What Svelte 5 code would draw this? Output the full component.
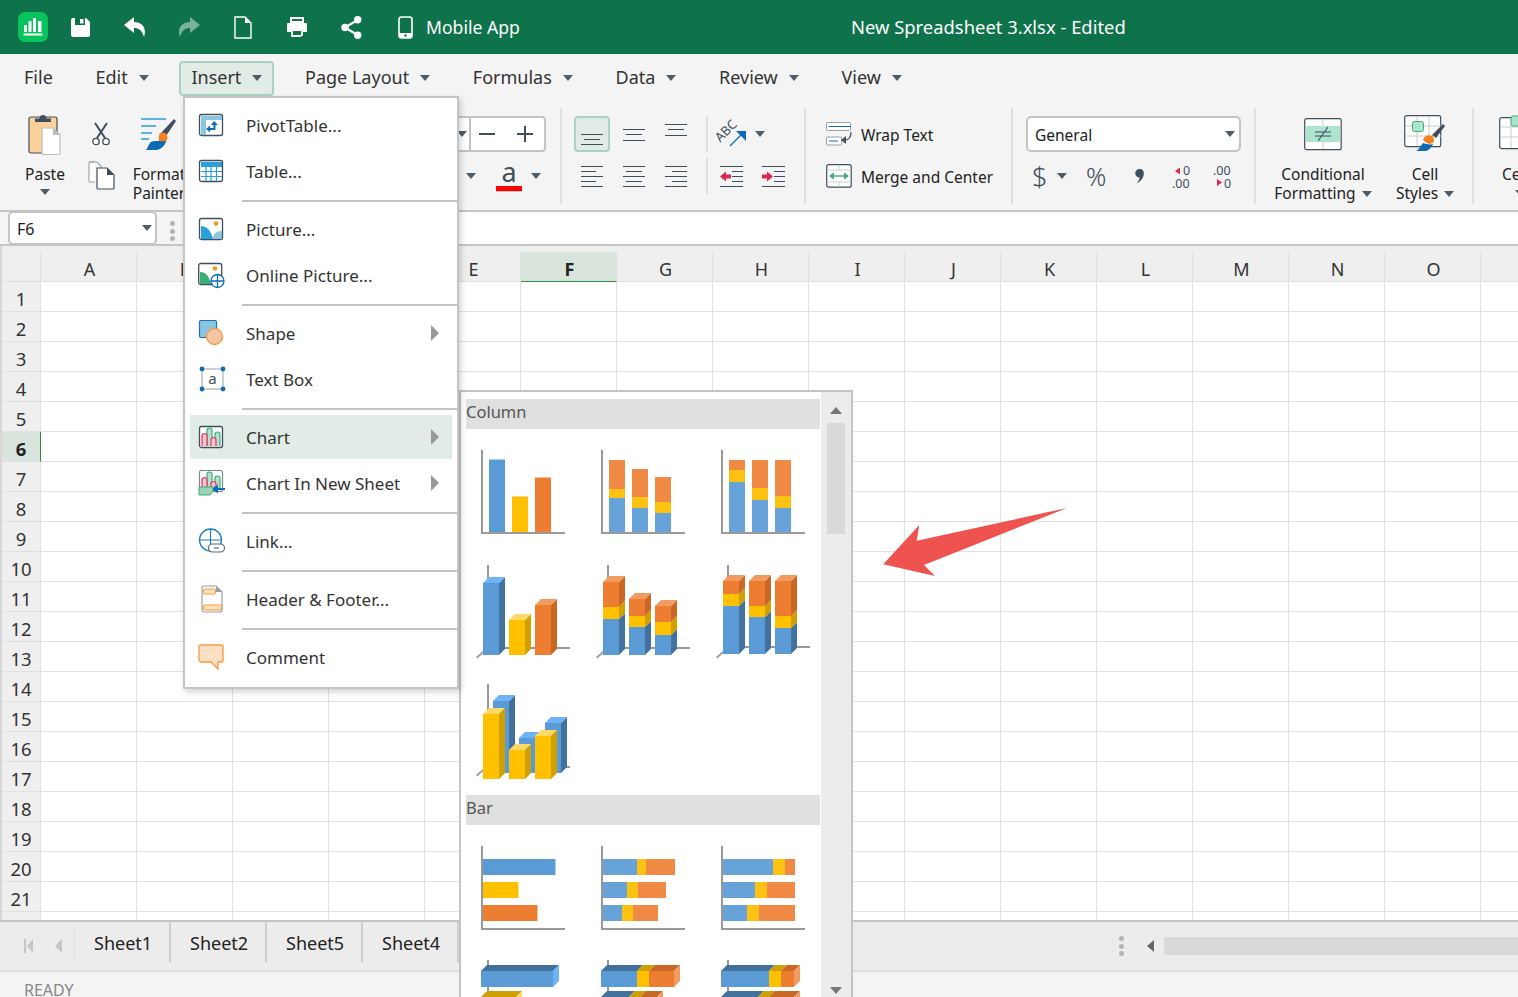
<script>
  const B = ['#5b9bd5', '#6db3f7', '#41719c'];
  const Y = ['#ffc000', '#ffd966', '#d0a000'];
  const O = ['#ed7d31', '#f29b61', '#c96724'];
  const FLAT = ['#67a3d8', '#fcc212', '#ef8943'];

  const rect = (fill, x, y, w, h) => ({ fill, points: `${x},${y} ${x + w},${y} ${x + w},${y + h} ${x},${y + h}` });
  const poly = (fill, ...p) => ({ fill, points: p.map((q) => q.join(',')).join(' ') });

  // same numbers are used for columns and bars
  const clustered = [[72.5, B[0]], [35.5, Y[0]], [54.5, O[0]]];
  const stacked = [[34, 9, 29], [24, 11, 28], [19, 11, 25]];
  const full = [[50, 12, 10], [32, 12, 28], [24, 12, 36]];
  const stacked3d = [[36, 12, 25], [28, 11, 17], [20, 13, 16]];
  const full3d = [[48, 12, 13], [37, 11, 25], [26, 12, 35]];

  const axis2d = [rect('#999', 9, 11, 2, 84), rect('#999', 9, 93, 84, 2)];

  function col3d(x, base, h, c, top = true) {
    const d = 6, w = 16, y = base - h;
    const out = [
      poly(c[2], [x + w, y], [x + w + d, y - d], [x + w + d, base - d], [x + w, base]),
      rect(c[0], x, y, w, h)
    ];
    if (top) out.push(poly(c[1], [x, y], [x + d, y - d], [x + w + d, y - d], [x + w, y]));
    return out;
  }

  function axis3d(top, line) {
    return [
      rect('#999', 15, top, 2, line - top),
      rect('#999', 15, line, 83, 2),
      poly('#999', [4, 100], [11, 94], [12, 95.5], [5, 101.5])
    ];
  }

  function stack3d(rows, base) {
    const xs = [11, 37, 63];
    return rows.flatMap((r, i) => {
      let y = base;
      return r.flatMap((h, k) => {
        const part = col3d(xs[i], y, h, [B, Y, O][k], k === 2);
        y -= h;
        return part;
      });
    });
  }

  function barRow(rows) {
    return rows.flatMap((r, i) => {
      let x = 11;
      return r.map((w, k) => {
        const part = rect(FLAT[k], x, 24 + i * 23, w, 16);
        x += w;
        return part;
      });
    });
  }

  function bar3d(x, y, w, c, side = true) {
    const d = 6, h = 16;
    const out = [
      poly(c[2], [x, y], [x + d, y - d], [x + w + d, y - d], [x + w, y]),
      rect(c[0], x, y, w, h)
    ];
    if (side) out.push(poly(c[1], [x + w, y], [x + w + d, y - d], [x + w + d, y + h - d], [x + w, y + h]));
    return out;
  }

  function barStack3d(rows) {
    return rows.flatMap((r, i) => {
      let x = 9;
      return r.flatMap((w, k) => {
        const part = bar3d(x, 18 + i * 26, w, [B, Y, O][k], k === 2);
        x += w;
        return part;
      });
    });
  }

  const columnCharts = [
    [...axis2d, ...clustered.map(([h, c], i) => rect(c, 17 + i * 23, 93 - h, 16, h))],
    [...axis2d, ...stacked.flatMap((r, i) => {
      let y = 93;
      return r.map((h, k) => { y -= h; return rect(FLAT[k], 17 + i * 23, y, 16, h); });
    })],
    [...axis2d, ...full.flatMap((r, i) => {
      let y = 93;
      return r.map((h, k) => { y -= h; return rect(FLAT[k], 17 + i * 23, y, 16, h); });
    })],
    [...axis3d(8, 90), ...col3d(11, 98, 72, B), ...col3d(37, 98, 35, Y), ...col3d(63, 98, 50, O)],
    [...axis3d(8, 90), ...stack3d(stacked3d, 98)],
    [...axis3d(8, 89), ...stack3d(full3d, 97)],
    [
      ...axis3d(9, 91),
      ...col3d(21, 98, 72, B), ...col3d(47, 98, 35, B), ...col3d(73, 98, 50, B),
      ...col3d(11, 104, 65, Y), ...col3d(37, 104, 29, Y), ...col3d(63, 104, 43, Y)
    ]
  ];

  const barCharts = [
    [...axis2d, ...clustered.map(([w, c], i) => rect(c, 11, 24 + i * 23, w, 16))],
    [...axis2d, ...barRow(stacked)],
    [...axis2d, ...barRow(full)],
    [rect('#999', 15, 7, 2, 60), ...bar3d(9, 18, 72, B), ...bar3d(9, 44, 35, Y)],
    [rect('#999', 15, 7, 2, 60), ...barStack3d(stacked3d)],
    [rect('#999', 15, 7, 2, 60), ...barStack3d(full3d)]
  ];

  const menuTabs = [
    { label: 'File' },
    { label: 'Edit', caret: true },
    { label: 'Insert', caret: true, active: true },
    { label: 'Page Layout', caret: true },
    { label: 'Formulas', caret: true },
    { label: 'Data', caret: true },
    { label: 'Review', caret: true },
    { label: 'View', caret: true }
  ];

  const frame = '<rect x="1.5" y="3.5" width="23" height="21" rx="2" fill="#fff" stroke="#3f4e5c" stroke-width="1.3"/>';
  const bars = '<path d="M9 23V7.500a2.500 2.500 0 0 1 5 0V23M17 23V11.500a2.500 2.500 0 0 1 5 0V23" fill="#b5e0cb" stroke="#3fae7c" stroke-width="1.200"/><path d="M4 23V13a2.500 2.500 0 0 1 5 0v10M13 23v-6a2.500 2.500 0 0 1 5 0v6" fill="#f9c4cf" stroke="#e0355f" stroke-width="1.200"/>';

  const menuItems = [
    { label: 'PivotTable...', icon: frame + '<path d="M3 5h21v4H8v15H3z" fill="#8ac6e0"/><path d="M16 10l4 4h-2.500v5H12v2.500L8 18l4-3.500V17h3.500v-3H13z" fill="#0b6cb5"/>' },
    { label: 'Table...', icon: frame + '<path d="M3 5h21v5H3z" fill="#29a0da"/><path d="M3 14.500h21M3 19.500h21M8 10v14M13 10v14M18.500 10v14" stroke="#29a0da" stroke-width="1.200"/>' },
    { label: 'Picture...', sepBefore: true, icon: frame + '<circle cx="18" cy="8.500" r="2.300" fill="#f7931e"/><path d="M15 24c0-5 3-8 9-8v8z" fill="#8ac6e0"/><path d="M3 11c6 0 10 5 12 13H3z" fill="#29a0da"/>' },
    { label: 'Online Picture...', icon: '<rect x=".7" y="2.500" width="23" height="21" rx="2" fill="#fff" stroke="#3f4e5c" stroke-width="1.300"/><circle cx="17" cy="7.500" r="2.300" fill="#f7931e"/><path d="M2 11c6 0 9 4 11 12H2z" fill="#3cae78"/><circle cx="19.500" cy="20" r="6.500" fill="#fff" stroke="#0b6cb5" stroke-width="1.300"/><path d="M13 20h13M19.500 13.500v13" stroke="#0b6cb5" stroke-width="1.300"/>' },
    { label: 'Shape', sepBefore: true, arrow: true, icon: '<rect x="1.500" y="1.500" width="17" height="17" rx="1.500" fill="#8ac6e0" stroke="#1f6fb5" stroke-width="1.200"/><circle cx="16.500" cy="17.500" r="8" fill="#f3c5a2" stroke="#f59a3e" stroke-width="1.300"/>' },
    { label: 'Text Box', textbox: true },
    { label: 'Chart', sepBefore: true, arrow: true, hover: true, icon: frame + bars },
    { label: 'Chart In New Sheet', arrow: true, icon: '<rect x="1.500" y="1.500" width="23" height="21" rx="2" fill="#fff" stroke="#7b858e" stroke-width="1.200"/><g transform="translate(0 -2)">' + bars + '</g><path d="M1 18h17l-6 8H1z" fill="#9ad5b8" stroke="#3fae7c"/><path d="M14 20l6-4.500V19h7v2h-7v3.500z" fill="#0b6cb5"/>' },
    { label: 'Link...', sepBefore: true, icon: '<circle cx="12.500" cy="13" r="11" fill="#fff" stroke="#1f7cc0" stroke-width="1.300"/><path d="M2 13h21M12.500 2v21" fill="none" stroke="#1f7cc0" stroke-width="1.200"/><rect x="10.500" y="17" width="16" height="8" rx="4" fill="#fff" stroke="#5b6772" stroke-width="1.200"/><path d="M16 21h5" stroke="#5b6772" stroke-width="1.200"/>' },
    { label: 'Header & Footer...', sepBefore: true, icon: '<path d="M5 1h13l6 6v18a2 2 0 0 1-2 2H6a2 2 0 0 1-2-2V2z" fill="#fff" stroke="#9aa0a6" stroke-width="1.200"/><path d="M18 1l6 6h-6z" fill="#9aa0a6"/><rect x="5.500" y="4" width="12" height="5" rx="1" fill="#ffe0bd" stroke="#f59a3e"/><rect x="5.500" y="20" width="18" height="5" rx="1" fill="#ffe0bd" stroke="#f59a3e"/>' },
    { label: 'Comment', sepBefore: true, icon: '<path d="M3 2h20a2 2 0 0 1 2 2v13a2 2 0 0 1-2 2h-3v7l-7-7H3a2 2 0 0 1-2-2V4a2 2 0 0 1 2-2z" fill="#fde0c4" stroke="#f59a3e" stroke-width="1.300"/>' }
  ];

  const columns = 'ABCDEFGHIJKLMNOP'.split('');
  const rows = Array.from({ length: 22 }, (_, i) => i + 1);

  const alignTop = [[134, 139, 144], [129, 134, 140], [124, 129, 135]];
  const textAlign = [
    [[0, 22], [0, 15], [0, 22], [0, 15], [0, 22]],
    [[0, 22], [3, 16], [0, 22], [3, 16], [0, 22]],
    [[0, 22], [7, 15], [0, 22], [7, 15], [0, 22]]
  ];
</script>

<div class="app">
  <header class="titlebar">
    <svg class="app-icon" width="30" height="30" viewBox="0 0 30 30">
      <rect width="30" height="30" rx="7" fill="#08c45c" />
      <path d="M6 13h3v7H6zM10.500 9h3v11h-3zM15 6h3v14h-3zM20 9h3.500v11H20zM5.500 21.500h19v2h-19z" fill="#fff" />
    </svg>
    <svg class="tb tb-save" width="19" height="19" viewBox="0 0 19 19">
      <path d="M0 2a2 2 0 0 1 2-2h13l4 4v13a2 2 0 0 1-2 2H2a2 2 0 0 1-2-2z" fill="#fff" />
      <path d="M4 0h10v7H4z" fill="#0e734b" /><path d="M9 1h3.500v4.500H9z" fill="#fff" />
    </svg>
    <svg class="tb tb-undo" width="22" height="20" viewBox="0 0 22 20">
      <path d="M10 0L0 8l10 8v-5c5 0 8 2.500 10 9 3-9-2-15-10-15z" fill="#fff" />
    </svg>
    <svg class="tb tb-redo" width="22" height="20" viewBox="0 0 22 20">
      <path d="M12 0l10 8-10 8v-5c-5 0-8 2.500-10 9-3-9 2-15 10-15z" fill="#fff" opacity=".45" />
    </svg>
    <svg class="tb tb-new" width="18" height="23" viewBox="0 0 18 23">
      <path d="M1 1h10l6 6v15H1z" fill="none" stroke="#fff" stroke-width="1.400" /><path d="M11 1l6 6h-6z" fill="#fff" />
    </svg>
    <svg class="tb tb-print" width="20" height="20" viewBox="0 0 20 20">
      <path d="M4 1h12v4H4z" fill="none" stroke="#fff" stroke-width="2" />
      <path d="M1 6h18a1 1 0 0 1 1 1v7a1 1 0 0 1-1 1h-3v-3H4v3H1a1 1 0 0 1-1-1V7a1 1 0 0 1 1-1z" fill="#fff" />
      <path d="M5 13h10v5l-2 1H5z" fill="none" stroke="#fff" stroke-width="1.800" />
    </svg>
    <svg class="tb tb-share" width="21" height="23" viewBox="0 0 21 23">
      <path d="M16.500 4L4 11.500 16.500 19" fill="none" stroke="#fff" stroke-width="2.200" />
      <circle cx="4" cy="11.500" r="3.700" fill="#fff" /><circle cx="16.700" cy="3.800" r="3.700" fill="#fff" /><circle cx="16.700" cy="19.200" r="3.700" fill="#fff" />
    </svg>
    <svg class="tb tb-phone" width="15" height="23" viewBox="0 0 15 23">
      <rect x="1" y="1" width="13" height="21" rx="2.500" fill="none" stroke="#fff" stroke-width="1.600" />
      <path d="M1 17h13v3a2 2 0 0 1-2 2H3a2 2 0 0 1-2-2z" fill="#fff" /><circle cx="7.500" cy="19.500" r="1.200" fill="#0e734b" />
    </svg>
    <span class="mobile">Mobile App</span>
    <span class="doc-title">New Spreadsheet 3.xlsx - Edited</span>
  </header>

  <nav class="menubar">
    {#each menuTabs as tab}
      <div class="tab" class:active={tab.active}>
        <span>{tab.label}</span>
        {#if tab.caret}<i class="caret"></i>{/if}
      </div>
    {/each}
  </nav>

  <section class="ribbon">
    <div class="group g-home">
      <div class="clip">
        <div class="paste">
          <svg width="34" height="42" viewBox="0 0 34 42">
            <rect x="1" y="4" width="28" height="36" rx="2" fill="#fdd19c" stroke="#3f4e5c" stroke-width="1.200" />
            <path d="M7 9V5.500h4.500a3.500 3.500 0 0 1 7 0H23V9z" fill="#3f4e5c" />
            <path d="M14 15h11l7 7v18a1.500 1.500 0 0 1-1.500 1.500h-15A1.500 1.500 0 0 1 14 40z" fill="#fff" stroke="#b9bec3" stroke-width="1.200" />
            <path d="M25 15l7 7h-7z" fill="#b9bec3" />
          </svg>
          <span>Paste</span>
          <i class="caret"></i>
        </div>
        <div class="clip-small">
          <svg width="18" height="24" viewBox="0 0 18 24">
            <path d="M3 1l10 15M15 1L5 16" stroke="#3f4e5c" stroke-width="2" fill="none" />
            <circle cx="4" cy="19.500" r="3.200" fill="#fff" stroke="#3f4e5c" stroke-width="1.300" />
            <circle cx="14" cy="19.500" r="3.200" fill="#fff" stroke="#3f4e5c" stroke-width="1.300" />
          </svg>
          <svg width="27" height="29" viewBox="0 0 27 29">
            <path d="M7 1H2a1 1 0 0 0-1 1v18a1 1 0 0 0 1 1h5" fill="#fff" stroke="#9aa0a6" stroke-width="1.100" />
            <path d="M1 1h8l4 4v3" fill="none" stroke="#9aa0a6" stroke-width="1.100" />
            <path d="M9 7h10l7 7v13a1 1 0 0 1-1 1H10a1 1 0 0 1-1-1z" fill="#fff" stroke="#3f4e5c" stroke-width="1.200" />
            <path d="M19 7l7 7h-7z" fill="#3f4e5c" />
          </svg>
        </div>
        <div class="painter">
          <svg width="36" height="33" viewBox="0 0 36 33">
            <path d="M0 1h25M0 8h15M0 15h11M0 21h8" stroke="#29a0da" stroke-width="1.300" />
            <path d="M20 15L33 1l2 2-10 15z" fill="#3f4e5c" />
            <path d="M19 15c5-2 9 2 7 7-1 3-5 5-8 5l-2-1c3-3 1-8 3-11z" fill="#f58220" />
            <path d="M5 32c2-2 3-7 5-8 5-2 8 0 15-1-1 5-5 8-9 9z" fill="#0b6cb5" />
          </svg>
          <span>Format<br />Painter</span>
        </div>
      </div>
      <div class="fontgroup">
        <div class="font-top">
          <div class="fontname"><i class="caret"></i></div>
          <div class="stepper">
            <svg width="54" height="20" viewBox="0 0 54 20"><path d="M0 10h16M38 10h16M46 2v16" stroke="#3f4e5c" stroke-width="2" /></svg>
          </div>
        </div>
        <div class="font-bottom">
          <i class="caret"></i>
          <div class="fontcolor"><span>a</span><b></b></div>
          <i class="caret"></i>
        </div>
      </div>
    </div>

    <div class="group g-align">
      <div class="align-grid">
        {#each alignTop as lines, i}
          <div class="btn" class:on={i === 0}>
            <svg width="22" height="32" viewBox="0 2 22 32">
              {#each lines as y, k}
                <path d="M{k === 1 ? 3 : 0} {y - 116 + 0.5}h{k === 1 ? 16 : 22}" stroke="#3f4e5c" stroke-width="1" />
              {/each}
            </svg>
          </div>
        {/each}
        {#each textAlign as lines}
          <div class="btn">
            <svg width="22" height="24" viewBox="0 0 22 24">
              {#each lines as [x, w], k}
                <path d="M{x} {2.500 + k * 5}h{w}" stroke="#3f4e5c" stroke-width="1" />
              {/each}
            </svg>
          </div>
        {/each}
      </div>
      <div class="mini-div"><i></i><i></i></div>
      <div class="indent-grid">
        <div class="orient">
          <svg width="32" height="30" viewBox="0 0 32 30">
            <text transform="translate(13 15) rotate(-45)" text-anchor="middle" class="abc">ABC</text>
            <path d="M14 27L26 15" stroke="#0b6cb5" stroke-width="1.300" />
            <path d="M20 12h10v10z" fill="#0b6cb5" />
          </svg>
          <i class="caret"></i>
        </div>
        {#each [0, 1] as dir}
          <div class="btn">
            <svg width="24" height="24" viewBox="0 0 24 24">
              <path d="M0 2.500h23M0 22.500h23" stroke="#3f4e5c" />
              <path d="M12 7.500h11M12 12.500h11M12 17.500h11" stroke="#3f4e5c" />
              {#if dir === 0}
                <path d="M0 12.500l6-5v3h5v4H6v3z" fill="#e0244e" />
              {:else}
                <path d="M11 12.500l-6-5v3H0v4h5v3z" fill="#e0244e" />
              {/if}
            </svg>
          </div>
        {/each}
      </div>
    </div>

    <div class="group g-wrap">
      <div class="line-btn">
        <svg width="26" height="24" viewBox="0 0 26 24">
          <rect x=".5" y=".5" width="24" height="8" rx="1" fill="#fff" stroke="#9aa0a6" />
          <path d="M3 4.500h22" stroke="#0b6cb5" />
          <rect x=".5" y="15" width="15" height="8" rx="1" fill="#fff" stroke="#9aa0a6" />
          <path d="M3 19h9" stroke="#0b6cb5" />
          <path d="M25 10c0 5-2 8-6 8" fill="none" stroke="#3f4e5c" stroke-width="1.200" />
          <path d="M15 18l5-4v8z" fill="#3f4e5c" />
        </svg>
        <span>Wrap Text</span>
      </div>
      <div class="line-btn">
        <svg width="26" height="24" viewBox="0 0 26 24">
          <rect x=".7" y=".7" width="24.500" height="22.500" rx="2" fill="#fff" stroke="#3f4e5c" stroke-width="1.200" />
          <path d="M13 1v5M13 18v5M1 6h24M1 18h24" stroke="#ccc" />
          <path d="M6 12h14" stroke="#3cae78" stroke-width="1.400" />
          <path d="M3 12l5-3.500v7zM23 12l-5-3.500v7z" fill="#3cae78" />
        </svg>
        <span>Merge and Center</span>
      </div>
    </div>

    <div class="group g-num">
      <div class="numfmt"><span>General</span><i class="caret"></i></div>
      <div class="numrow">
        <span class="sym dollar">$</span>
        <i class="caret"></i>
        <span class="sym percent">%</span>
        <svg class="comma" width="10" height="15" viewBox="0 0 10 15"><path d="M4.500 0a4 4 0 0 1 4.300 4.500c0 4-3 8-7.300 10 2-2 3-3.800 3-6a4.200 4.200 0 0 1 0-8.500z" fill="#3f4e5c" /></svg>
        <svg class="dec1" width="20" height="25" viewBox="0 0 20 25">
          <path d="M8 3.500l-5 3.500 5 3.500z" fill="#e0244e" />
          <text x="11" y="11" class="dec">0</text><text x="0" y="24" class="dec">.00</text>
        </svg>
        <svg class="dec2" width="20" height="25" viewBox="0 0 20 25">
          <text x="1" y="11" class="dec">.00</text>
          <path d="M5 15l5 3.500-5 3.500z" fill="#e0244e" />
          <text x="12" y="24" class="dec">0</text>
        </svg>
      </div>
    </div>

    <div class="group g-styles">
      <div class="big-btn cond">
        <svg width="38" height="36" viewBox="0 0 38 36">
          <rect x=".7" y="3.700" width="36.500" height="31" rx="2" fill="#fff" stroke="#3f4e5c" stroke-width="1.200" />
          <path d="M19 4v30" stroke="#ccc" />
          <path d="M2 11h34v16H2z" fill="#aee3d0" />
          <path d="M11 17h16M11 21h16M24 12l-10 14" stroke="#3f4e5c" stroke-width="1.100" />
        </svg>
        <span>Conditional</span>
        <span class="last">Formatting <i class="caret"></i></span>
      </div>
      <div class="big-btn">
        <svg width="42" height="36" viewBox="0 0 42 36">
          <rect x=".7" y=".7" width="36" height="31" rx="2" fill="#fff" stroke="#3f4e5c" stroke-width="1.200" />
          <path d="M1 11h36M1 21h36M13 1v30M25 1v30" stroke="#ccc" />
          <rect x="8.500" y="6.500" width="11" height="10" rx="2" fill="#aee3d0" stroke="#3cae78" />
          <path d="M28 20l11-11 2 2-9 12z" fill="#3f4e5c" />
          <path d="M19 25c1-4 5-6 9-4 3 2 2 6 1 7-4 2-7 0-10-3z" fill="#f58220" />
          <path d="M12 36c3-1 5-6 7-8 3 1 7 2 10 1-1 3-4 6-7 7z" fill="#0b6cb5" />
        </svg>
        <span>Cell</span>
        <span class="last">Styles <i class="caret"></i></span>
      </div>
    </div>

    <div class="g-cells">
      <svg width="30" height="36" viewBox="0 0 30 36">
        <rect x=".7" y="2.700" width="36" height="31" rx="2" fill="#fff" stroke="#3f4e5c" stroke-width="1.200" />
        <path d="M1 12h30M1 22h30M12 3v30" stroke="#ccc" />
        <rect x="12" y="1" width="14" height="10" rx="2" fill="#aee3d0" stroke="#3cae78" />
      </svg>
      <span>Cells</span>
      <i class="caret"></i>
    </div>
  </section>

  <div class="formulabar">
    <div class="namebox"><span>F6</span><i class="caret"></i></div>
    <div class="handle"><i></i><i></i><i></i></div>
    <div class="formula-input"></div>
  </div>

  <main class="sheet">
    <div class="colhead">
      <div class="corner"></div>
      {#each columns as c}
        <div class="colcell" class:sel={c === 'F'}>{c === 'P' ? '' : c}</div>
      {/each}
    </div>
    {#each rows as r}
      <div class="row">
        <div class="rowhead" class:sel={r === 6}>{r === 22 ? '' : r}</div>
        {#each columns as c}
          <div class="cell"></div>
        {/each}
      </div>
    {/each}
  </main>

  <div class="sheetbar">
    <div class="nav">
      <svg width="9" height="14" viewBox="0 0 9 14"><path d="M0 0h2v14H0zM9 0v14L3 7z" fill="#c6c6c6" /></svg>
      <svg width="7" height="14" viewBox="0 0 7 14"><path d="M7 0v14L0 7z" fill="#c6c6c6" /></svg>
    </div>
    {#each ['Sheet1', 'Sheet2', 'Sheet5', 'Sheet4', 'Sheet3'] as name}
      <div class="sheet-tab">{name}</div>
    {/each}
    <div class="sb-right">
      <div class="handle"><i></i><i></i><i></i></div>
      <svg width="7" height="12" viewBox="0 0 7 12"><path d="M7 0v12L0 6z" fill="#666" /></svg>
      <div class="track"></div>
    </div>
  </div>

  <footer class="status"><span>READY</span></footer>

  <!-- Insert dropdown -->
  <div class="dropdown">
    {#each menuItems as item}
      {#if item.sepBefore}<div class="sep"></div>{/if}
      <div class="item" class:hover={item.hover}>
        <svg class="item-icon" width="28" height="28" viewBox="0 0 28 28">
          {#if item.textbox}
            <rect x="4" y="4" width="21" height="20" fill="#fff" stroke="#9aa0a6" />
            <text x="14.500" y="19" class="tb-a">a</text>
            <circle cx="4" cy="4" r="2.400" fill="#0b6cb5" /><circle cx="25" cy="4" r="2.400" fill="#0b6cb5" />
            <circle cx="4" cy="24" r="2.400" fill="#0b6cb5" /><circle cx="25" cy="24" r="2.400" fill="#0b6cb5" />
          {:else}
            {@html item.icon}
          {/if}
        </svg>
        <span class="item-label">{item.label}</span>
        {#if item.arrow}
          <svg class="item-arrow" width="8" height="16" viewBox="0 0 8 16"><path d="M0 0l8 8-8 8z" fill="#999" /></svg>
        {/if}
      </div>
    {/each}
  </div>

  <!-- Chart gallery -->
  <div class="gallery">
    <div class="gallery-body">
      <div class="gal-head">Column</div>
      <div class="tiles">
        {#each columnCharts as shapes}
          <svg width="120" height="118" viewBox="0 0 120 118">
            {#each shapes as s}<polygon points={s.points} fill={s.fill} />{/each}
          </svg>
        {/each}
      </div>
      <div class="gal-head">Bar</div>
      <div class="tiles">
        {#each barCharts as shapes}
          <svg width="120" height="118" viewBox="0 0 120 118">
            {#each shapes as s}<polygon points={s.points} fill={s.fill} />{/each}
          </svg>
        {/each}
      </div>
    </div>
    <div class="gal-scroll">
      <svg width="12" height="7" viewBox="0 0 12 7"><path d="M6 0l6 7H0z" fill="#777" /></svg>
      <div class="thumb"></div>
      <svg class="down" width="12" height="7" viewBox="0 0 12 7"><path d="M0 0h12L6 7z" fill="#777" /></svg>
    </div>
  </div>

  <svg class="callout" width="192" height="76" viewBox="0 0 192 76">
    <polygon points="8.300,56.300 44.300,17 41.700,32.700 192,0 49,57 60,68" fill="#ee5350" />
  </svg>
</div>

<style>
  :global(body) {
    margin: 0;
    font-family: "Noto Sans", "Open Sans", sans-serif;
    color: #222;
  }

  .app {
    position: relative;
    width: 1518px;
    height: 997px;
    overflow: hidden;
    background: #fff;
    display: flex;
    flex-direction: column;
  }

  .caret {
    display: inline-block;
    flex: none;
    width: 0;
    height: 0;
    border-left: 5.500px solid transparent;
    border-right: 5.500px solid transparent;
    border-top: 6px solid #4f5b66;
  }

  /* title bar */
  .titlebar {
    flex: none;
    height: 54px;
    background: #0e734b;
    display: flex;
    align-items: center;
    color: #fff;
    font-size: 18px;
    padding-left: 18px;
  }
  .app-icon { flex: none; }
  .tb { flex: none; }
  .tb-save { margin-left: 23px; }
  .tb-undo { margin-left: 34px; }
  .tb-redo { margin-left: 32px; }
  .tb-new { margin-left: 34px; }
  .tb-print { margin-left: 35px; }
  .tb-share { margin-left: 34px; }
  .tb-phone { margin-left: 36px; }
  .mobile { margin-left: 13px; width: 93px; font-size: 17.600px; white-space: nowrap; }
  .doc-title { margin-left: 332px; margin-bottom: 1px; font-size: 18.400px; white-space: nowrap; }

  /* menu */
  .menubar {
    flex: none;
    height: 44px;
    background: #f4f4f4;
    display: flex;
    align-items: flex-start;
    gap: 18.700px;
    padding: 7px 0 0 12px;
    box-sizing: border-box;
    font-size: 18px;
    color: #333;
  }
  .tab {
    height: 35px;
    box-sizing: border-box;
    border: 2px solid transparent;
    border-radius: 4px;
    padding: 0 10px 4px;
    display: flex;
    align-items: center;
    gap: 11px;
    white-space: nowrap;
  }
  .tab .caret { margin-top: 3px; }
  .tab.active {
    background: #e0ece5;
    border-color: #a9d3c0;
  }

  /* ribbon */
  .ribbon {
    flex: none;
    height: 114px;
    background: #f4f4f4;
    border-bottom: 2px solid #c4c4c4;
    box-sizing: border-box;
    padding: 10px 0 6px;
    display: flex;
    font-size: 15.500px;
    color: #222;
    overflow: hidden;
  }
  .group {
    flex: none;
    box-sizing: border-box;
    border-right: 2px solid #e0e0e0;
  }
  .g-home {
    width: 562px;
    display: flex;
    justify-content: space-between;
    padding-right: 14px;
  }
  .clip { display: flex; }
  .paste {
    width: 60px;
    margin-left: 15px;
    display: flex;
    flex-direction: column;
    align-items: center;
    padding-top: 5px;
  }
  .paste span { line-height: 20px; margin-top: 9px; }
  .paste .caret { margin-top: 5px; }
  .clip-small {
    width: 30px;
    margin-left: 11px;
    display: flex;
    flex-direction: column;
    align-items: center;
    gap: 15px;
    padding-top: 14px;
  }
  .painter {
    width: 60px;
    margin-left: 13px;
    padding-top: 10px;
    text-align: center;
    display: flex;
    flex-direction: column;
    align-items: center;
    line-height: 19px;
    white-space: nowrap;
  }
  .painter span { margin-top: 14px; }

  .fontgroup {
    display: flex;
    flex-direction: column;
    align-items: flex-end;
    padding-top: 8px;
    gap: 6px;
  }
  .font-top { display: flex; height: 36px; }
  .fontname {
    width: 60px;
    box-sizing: border-box;
    background: #fff;
    border: 2px solid #c4c4c4;
    border-right: none;
    display: flex;
    align-items: center;
    justify-content: flex-end;
    padding-right: 2px;
  }
  .stepper {
    width: 77px;
    box-sizing: border-box;
    background: #fff;
    border: 2px solid #c4c4c4;
    border-radius: 0 4px 4px 0;
    display: flex;
    align-items: center;
    justify-content: center;
    padding-right: 4px;
  }
  .font-bottom {
    display: flex;
    align-items: center;
    height: 36px;
    width: 80px;
    padding-right: 2px;
    box-sizing: border-box;
  }
  .fontcolor {
    width: 26px;
    margin: 0 9px 0 20px;
    display: flex;
    flex-direction: column;
    align-items: center;
    color: #3f4e5c;
  }
  .fontcolor span { font-size: 27px; line-height: 24px; }
  .fontcolor b {
    display: block;
    width: 26px;
    height: 5px;
    background: #f00;
    margin-top: 2px;
    border-bottom: 1px solid #c4c4c4;
  }

  .g-align { width: 244px; display: flex; padding: 8px 0 0 12px; }
  .align-grid, .indent-grid {
    display: grid;
    grid-template-columns: 36px 36px 36px;
    grid-auto-rows: 36px;
    column-gap: 6px;
    row-gap: 6px;
  }
  .indent-grid { grid-template-columns: 36px 36px; }
  .btn {
    box-sizing: border-box;
    display: flex;
    align-items: center;
    justify-content: center;
    border: 2px solid transparent;
    border-radius: 4px;
  }
  .btn.on { background: #e0ece5; border-color: #a9d3c0; }
  .mini-div {
    display: flex;
    flex-direction: column;
    gap: 6px;
    margin: 0 6px 0 12px;
  }
  .mini-div i { display: block; width: 2px; height: 36px; background: #e0e0e0; }
  .orient {
    grid-column: span 2;
    display: flex;
    align-items: center;
    gap: 7px;
    padding-left: 2px;
  }
  .orient svg { overflow: visible; }
  .abc { font: 13px "Noto Sans", sans-serif; fill: #3f4e5c; }

  .g-wrap {
    width: 207px;
    padding: 8px 0 0 20px;
    display: grid;
    grid-auto-rows: 36px;
    row-gap: 6px;
  }
  .line-btn {
    display: flex;
    align-items: center;
    gap: 9px;
    white-space: nowrap;
  }
  .line-btn span { margin-top: 2px; }

  .g-num { width: 243px; padding: 8px 0 0 13px; }
  .numfmt {
    width: 215px;
    height: 36px;
    box-sizing: border-box;
    background: #fff;
    border: 2px solid #c4c4c4;
    border-radius: 5px;
    display: flex;
    align-items: center;
    justify-content: space-between;
    padding: 0 4px 0 7px;
  }
  .numfmt span { margin-top: 2px; }
  .numrow {
    height: 36px;
    margin-top: 6px;
    display: flex;
    align-items: center;
    padding-left: 6px;
  }
  .sym { color: #3f4e5c; line-height: 1; }
  .dollar { font-size: 27px; width: 25px; font-weight: 300; }
  .percent { font-size: 25px; margin-left: 19px; width: 20px; font-weight: 300; white-space: nowrap; }
  .comma { margin-left: 29px; }
  .dec1 { margin-left: 27px; }
  .dec2 { margin-left: 20px; }
  .dec { font: 12.500px "Noto Sans", sans-serif; fill: #3f4e5c; }

  .g-styles { width: 218px; display: flex; padding: 7px 0 0 7px; }
  .big-btn {
    width: 84px;
    display: flex;
    flex-direction: column;
    align-items: center;
    line-height: 19px;
    white-space: nowrap;
  }
  .big-btn.cond { width: 120px; }
  .big-btn svg { margin-bottom: 14px; }
  .last { display: flex; align-items: center; gap: 6px; }

  .g-cells {
    flex: none;
    width: 44px;
    padding: 7px 0 0 25px;
    line-height: 19px;
    display: flex;
    flex-direction: column;
    align-items: flex-start;
  }
  .g-cells svg { margin-bottom: 14px; }
  .g-cells span { margin-left: 3px; }
  .g-cells .caret { margin: 6px 0 0 16px; }

  /* formula bar */
  .formulabar {
    flex: none;
    height: 34px;
    background: #f4f4f4;
    border-bottom: 2px solid #c4c4c4;
    box-sizing: border-box;
    display: flex;
    align-items: flex-start;
    padding-left: 8px;
  }
  .namebox {
    width: 149px;
    height: 34px;
    margin-top: -1px;
    box-sizing: border-box;
    background: #fff;
    border: 2px solid #c4c4c4;
    border-radius: 5px;
    display: flex;
    align-items: center;
    justify-content: space-between;
    padding: 0 3px 0 7px;
    font-size: 16px;
  }
  .namebox span { margin-top: 2px; }
  .handle {
    display: flex;
    flex-direction: column;
    gap: 2.500px;
    flex: none;
  }
  .handle i {
    display: block;
    width: 5px;
    height: 5px;
    border-radius: 50%;
    background: #b4b4b4;
  }
  .formulabar .handle { margin: 9px 0 0 13px; }
  .formula-input { flex: 1; height: 32px; background: #fff; margin-left: 10px; }

  /* grid */
  .sheet {
    flex: none;
    height: 674px;
    overflow: hidden;
    border-left: 2px solid #d8d8d8;
    box-sizing: border-box;
  }
  .colhead {
    display: flex;
    height: 36px;
    box-sizing: border-box;
    padding-top: 6px;
    background: #efefef;
    border-bottom: 1px solid #e0e0e0;
  }
  .corner { flex: none; width: 38px; border-right: 1px solid #e0e0e0; }
  .colcell {
    flex: none;
    width: 95px;
    box-sizing: border-box;
    padding-left: 2px;
    border-right: 1px solid #e0e0e0;
    text-align: center;
    font-size: 18px;
    line-height: 34px;
    color: #333;
  }
  .colcell {
    width: 96px;
  }
  .colcell.sel {
    background: #d9e4dc;
    border-bottom: 1px solid #2e8b3e;
    font-weight: 700;
    height: 30px;
    color: #222;
  }
  .row { display: flex; height: 30px; }
  .rowhead {
    flex: none;
    width: 38px;
    box-sizing: content-box;
    height: 29px;
    background: #efefef;
    border-right: 1px solid #e0e0e0;
    border-bottom: 1px solid #e0e0e0;
    text-align: center;
    font-size: 18.500px;
    line-height: 34px;
    color: #333;
  }
  .rowhead.sel {
    background: #d9e4dc;
    border-right: 1px solid #2e8b3e;
    font-weight: 700;
    color: #222;
  }
  .cell {
    flex: none;
    width: 95px;
    height: 29px;
    border-right: 1px solid #e0e0e0;
    border-bottom: 1px solid #e0e0e0;
  }

  /* sheet tabs */
  .sheetbar {
    flex: none;
    height: 52px;
    background: #ececec;
    border-top: 2px solid #c4c4c4;
    border-bottom: 2px solid #dfdfdf;
    box-sizing: border-box;
    display: flex;
    align-items: flex-start;
    font-size: 18px;
    color: #222;
  }
  .nav {
    width: 75px;
    height: 40px;
    box-sizing: border-box;
    padding: 17px 0 0 24px;
    display: flex;
    align-items: flex-start;
    gap: 22px;
    border-right: 1px solid #e4e4e4;
    flex: none;
  }
  .sheet-tab {
    width: 96px;
    height: 40px;
    box-sizing: border-box;
    flex: none;
    border-right: 2px solid #cfcfcf;
    padding-left: 19px;
    line-height: 42px;
    white-space: nowrap;
  }
  .sb-right {
    margin-left: auto;
    display: flex;
    align-items: center;
    height: 48px;
    width: 399px;
    flex: none;
    box-sizing: border-box;
    padding-left: 0;
  }
  .sb-right .handle { margin-left: 0; margin-right: 23px; }
  .sb-right svg { flex: none; margin-right: 10px; }
  .track { flex: 1; height: 18px; background: #d9d9d9; }

  .status {
    flex: none;
    height: 25px;
    background: #f4f4f4;
    padding-left: 24px;
    font-size: 16px;
    color: #888;
    line-height: 36px;
  }

  /* insert menu */
  .dropdown {
    position: absolute;
    left: 183px;
    top: 96px;
    width: 276px;
    height: 593px;
    box-sizing: border-box;
    background: #fff;
    border: 2px solid #c4c4c4;
    padding-top: 5px;
    box-shadow: 2px 3px 6px rgba(0, 0, 0, 0.18);
    font-size: 17px;
    color: #333;
    z-index: 3;
  }
  .item {
    height: 44px;
    margin: 0 5px 2px;
    display: flex;
    align-items: center;
    padding-left: 8px;
    position: relative;
    white-space: nowrap;
  }
  .item.hover { background: #e0ece5; }
  .item-icon { flex: none; margin-right: 20px; }
  .item-arrow { position: absolute; right: 13px; top: 14px; }
  .sep {
    height: 2px;
    background: #c4c4c4;
    margin: 7px 0 5px 57px;
  }
  .tb-a { font: 15px "Noto Sans", sans-serif; fill: #3f4e5c; text-anchor: middle; }

  /* chart gallery */
  .gallery {
    position: absolute;
    left: 459px;
    top: 390px;
    width: 394px;
    height: 607px;
    box-sizing: border-box;
    background: #fff;
    border: 2px solid #c4c4c4;
    border-bottom: none;
    display: flex;
    overflow: hidden;
    z-index: 2;
  }
  .gallery-body { width: 360px; flex: none; padding-top: 7px; }
  .gal-head {
    margin: 0 1px 0 5px;
    height: 30px;
    background: #e0e0e0;
    font-size: 16.500px;
    line-height: 26px;
    color: #555;
  }
  .tiles {
    display: grid;
    grid-template-columns: repeat(3, 120px);
    grid-auto-rows: 118px;
    padding: 10px 0 2px 11px;
  }
  .gal-scroll {
    flex: 1;
    background: #ececec;
    display: flex;
    flex-direction: column;
    align-items: center;
    padding-top: 15px;
    position: relative;
  }
  .gal-scroll svg { flex: none; }
  .thumb { width: 18px; height: 111px; background: #d9d9d9; margin-top: 9px; }
  .gal-scroll .down { position: absolute; top: 595px; }

  .callout {
    position: absolute;
    left: 875px;
    top: 508px;
    z-index: 4;
  }
</style>
